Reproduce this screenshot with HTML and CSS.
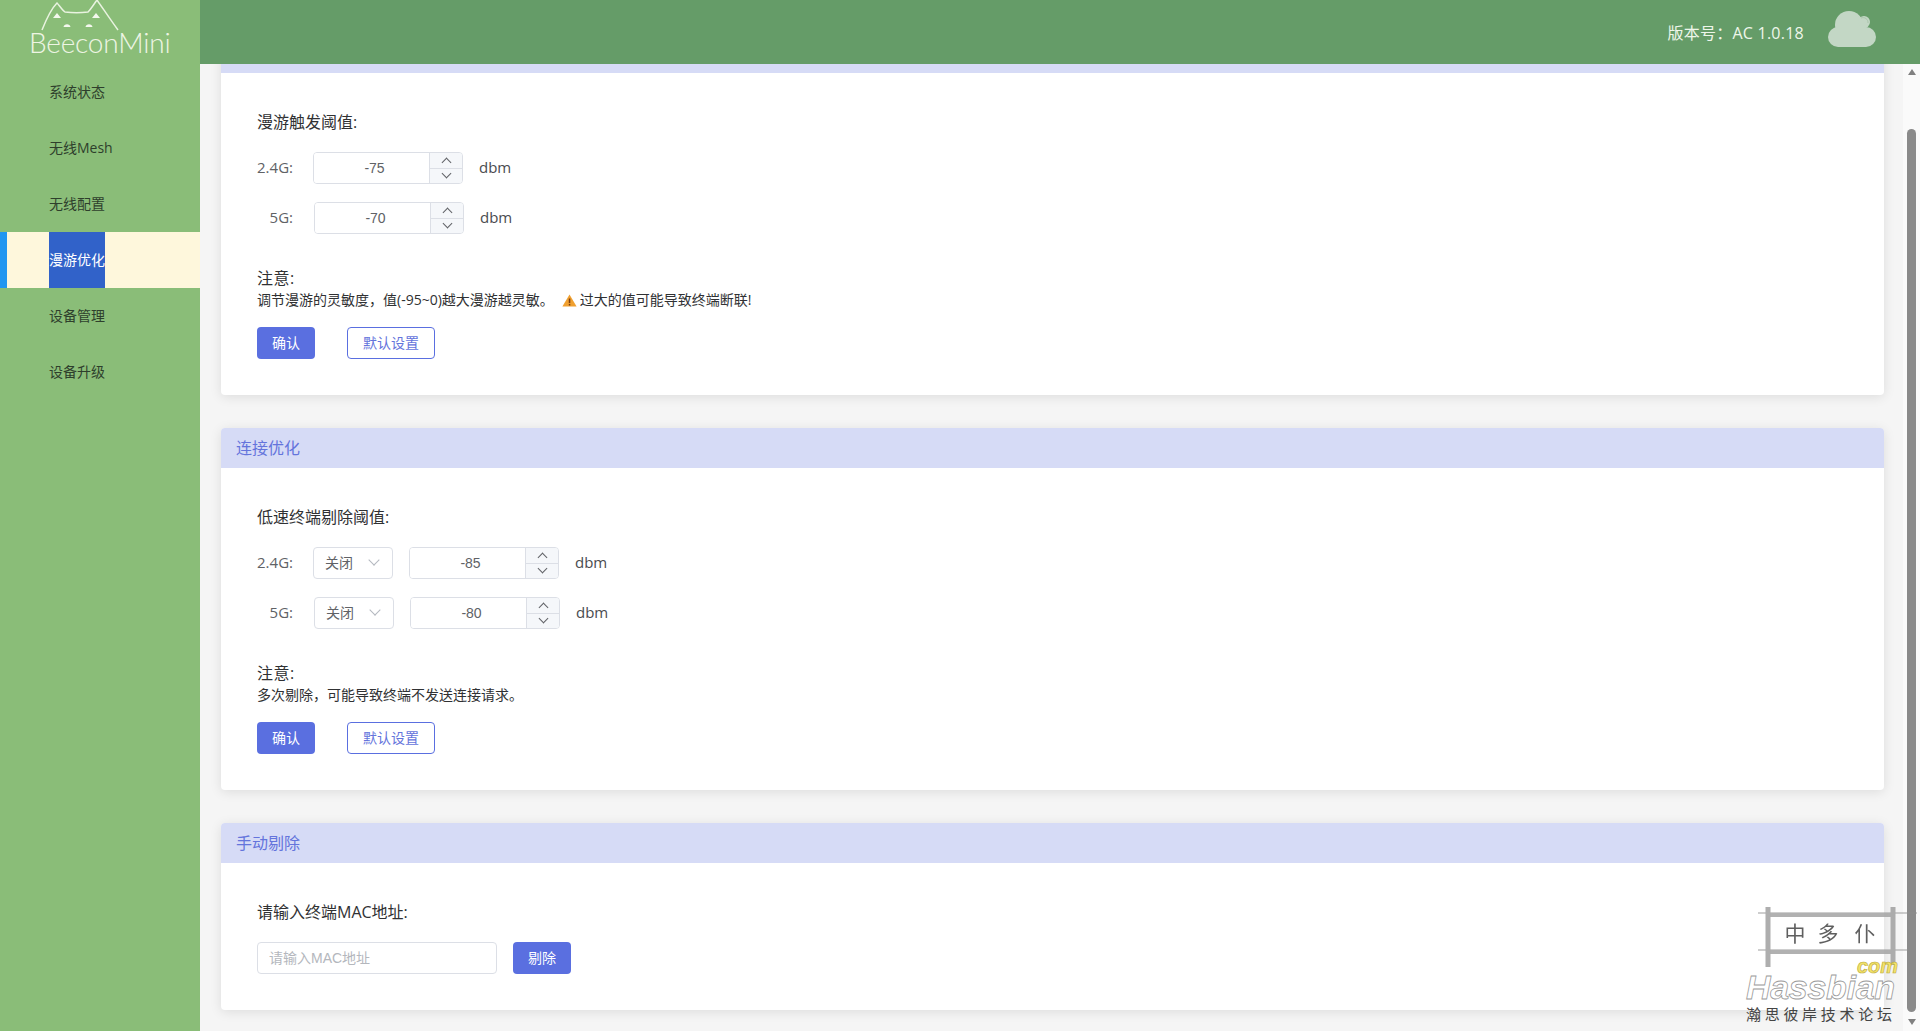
FILE: index.html
```html
<!DOCTYPE html>
<html lang="zh-CN">
<head>
  <meta charset="UTF-8" />
  <title>BeeconMini</title>
  <link rel="stylesheet" href="styles.css">
</head>
<body>

  <!-- Sidebar -->
  <aside class="sidebar">
    <div class="logo">
      <svg class="logo-cat" width="142" height="33" viewBox="0 0 142 33">
        <path d="M13 30 C17 20 22 9 28 3 C30 5 33 10 36 12 C44 13 51 13 59 12 C62 9 65 4 68 0 C75 10 83 22 89 30" fill="none" stroke="#e9f3e0" stroke-width="1.5"/>
        <path d="M24 18 L28 13 L32 18 Z M63 18 L67 13 L71 18 Z" fill="#f4f8ee"/>
        <path d="M34.5 27 A3.6 3.6 0 0 1 41.5 27 Z M56.5 27 A3.6 3.6 0 0 1 63.5 27 Z" fill="#f4f8ee"/>
      </svg>
      <span class="logo-text">BeeconMini</span>
    </div>
    <nav class="menu">
      <a class="menu-item"><span>系统状态</span></a>
      <a class="menu-item"><span>无线Mesh</span></a>
      <a class="menu-item"><span>无线配置</span></a>
      <a class="menu-item active"><span>漫游优化</span></a>
      <a class="menu-item"><span>设备管理</span></a>
      <a class="menu-item"><span>设备升级</span></a>
    </nav>
  </aside>

  <div class="main">
    <header class="topbar">
      <span class="version">版本号&#65306;AC 1.0.18</span>
      <svg class="cloud" width="48" height="36" viewBox="0 0 48 36">
        <g fill="#c3d7c5">
          <circle cx="21" cy="14" r="14"/>
          <circle cx="36" cy="11" r="6"/>
          <circle cx="10" cy="26" r="10"/>
          <circle cx="38" cy="26" r="10"/>
          <rect x="10" y="16" width="28" height="20"/>
        </g>
        <path d="M33 7 A5 5 0 0 1 40 12" fill="none" stroke="#a9c6ab" stroke-width="1"/>
      </svg>
    </header>

    <div class="page">
      <div class="content">

        <!-- Roaming, the head of this card is scrolled under the top bar -->
        <section class="card card-scrolled">
          <div class="card-head"></div>
          <div class="card-body">
            <div class="field-title">漫游触发阈值:</div>
            <div class="row">
              <label class="row-label">2.4G:</label>
              <div class="stepper">
                <input type="text" value="-75" />
                <div class="step"><span><i class="up"></i></span><span><i class="down"></i></span></div>
              </div>
              <span class="unit">dbm</span>
            </div>
            <div class="row row-5g">
              <label class="row-label">5G:</label>
              <div class="stepper">
                <input type="text" value="-70" />
                <div class="step"><span><i class="up"></i></span><span><i class="down"></i></span></div>
              </div>
              <span class="unit">dbm</span>
            </div>
            <div class="note-title">注意:</div>
            <div class="note">调节漫游的灵敏度&#65292;值(-95~0)越大漫游越灵敏。<svg class="warn" width="15" height="13" viewBox="0 0 15 13">
                <path d="M7.5 0.5 L14.6 12.6 L0.4 12.6 Z" fill="#f0a030"/>
                <rect x="6.8" y="4.5" width="1.5" height="4.6" fill="#7a3d10"/>
                <rect x="6.8" y="10" width="1.5" height="1.5" fill="#7a3d10"/>
              </svg>过大的值可能导致终端断联!</div>
            <div class="actions">
              <button class="btn btn-primary">确认</button>
              <button class="btn btn-plain">默认设置</button>
            </div>
          </div>
        </section>

        <!-- Connection -->
        <section class="card">
          <h3 class="card-head">连接优化</h3>
          <div class="card-body">
            <div class="field-title">低速终端剔除阈值:</div>
            <div class="row">
              <label class="row-label">2.4G:</label>
              <div class="select">关闭<i class="down"></i></div>
              <div class="stepper">
                <input type="text" value="-85" />
                <div class="step"><span><i class="up"></i></span><span><i class="down"></i></span></div>
              </div>
              <span class="unit">dbm</span>
            </div>
            <div class="row row-5g">
              <label class="row-label">5G:</label>
              <div class="select">关闭<i class="down"></i></div>
              <div class="stepper">
                <input type="text" value="-80" />
                <div class="step"><span><i class="up"></i></span><span><i class="down"></i></span></div>
              </div>
              <span class="unit">dbm</span>
            </div>
            <div class="note-title">注意:</div>
            <div class="note">多次剔除&#65292;可能导致终端不发送连接请求。</div>
            <div class="actions">
              <button class="btn btn-primary">确认</button>
              <button class="btn btn-plain">默认设置</button>
            </div>
          </div>
        </section>

        <!-- Manual kick -->
        <section class="card">
          <h3 class="card-head">手动剔除</h3>
          <div class="card-body">
            <div class="field-title">请输入终端MAC地址:</div>
            <div class="row">
              <input class="mac-input" type="text" placeholder="请输入MAC地址" />
              <button class="btn btn-primary">剔除</button>
            </div>
          </div>
        </section>
      </div>

      <div class="scrollbar">
        <span class="arrow-up"></span>
        <span class="thumb"></span>
        <span class="arrow-down"></span>
      </div>
    </div>
  </div>

  <!-- Forum watermark over the corner of the shot -->
  <div class="watermark">
    <svg class="stamp" width="166" height="62" viewBox="0 0 166 62">
      <rect x="30" y="12" width="100" height="30" fill="#fff"/>
      <g class="stamp-lines" fill="none">
        <path d="M6 6 H165 M6 43 H156" stroke-width="1.2" stroke="#8d8d8d"/>
        <path d="M16 8 H142 M16 45 H142" stroke-width="4" stroke="#a4a4a4"/>
        <path d="M16 0 V60 M141 0 V58" stroke-width="5" stroke="#a0a0a0"/>
      </g>
      <g class="stamp-text">
        <text x="43" y="34">中</text>
        <text x="76" y="34">多</text>
        <text x="113" y="34">仆</text>
      </g>
    </svg>
    <span class="wm-com">com</span>
    <span class="wm-name">Hassbian</span>
    <span class="wm-cn">瀚思彼岸技术论坛</span>
  </div>

</body>
</html>
```

FILE: styles.css
```css
* {
  box-sizing: border-box;
}
body {
  margin: 0;
  height: 100vh;
  display: flex;
  overflow: hidden;
  background: #f5f5f5;
  color: #303133;
  font-family: "Open Sans", "Noto Sans CJK SC", sans-serif;
  font-size: 14px;
}

/* sidebar */
.sidebar {
  width: 200px;
  flex-shrink: 0;
  background: #8abd78;
}
.logo {
  height: 64px;
  padding: 0 0 0 29px;
  overflow: hidden;
}
.logo-cat {
  display: block;
}
.logo-text {
  display: block;
  margin-top: -5px;
  font-family: Lato, sans-serif;
  font-weight: 300;
  font-size: 28px;
  line-height: 28px;
  letter-spacing: -0.2px;
  color: #eef5e4;
}
.menu-item {
  display: flex;
  height: 56px;
  padding-left: 49px;
  line-height: 55px;
  color: #2e3f2c;
}
.menu-item.active {
  background: #fef7dc;
  border-left: 7px solid #2196f0;
  padding-left: 42px;
}
.menu-item.active span {
  background: #3162c9;
  color: #fff;
}

/* top bar */
.main {
  flex: 1;
  min-width: 0;
  display: flex;
  flex-direction: column;
}
.topbar {
  height: 64px;
  flex-shrink: 0;
  display: flex;
  align-items: center;
  justify-content: flex-end;
  gap: 24px;
  padding-right: 44px;
  background: #659c68;
  position: relative;
  z-index: 1;
}
.version {
  font-size: 16px;
  letter-spacing: 0.25px;
  color: #eef6ea;
}
.cloud {
  margin-top: -6px;
}

/* page */
.page {
  flex: 1;
  min-height: 0;
  display: flex;
}
.content {
  flex: 1;
  min-width: 0;
  padding: 0 19px 0 21px;
  overflow: hidden;
}
.card {
  margin-bottom: 33px;
  background: #fff;
  border-radius: 4px;
  box-shadow: 0 2px 12px rgba(0,0,0,0.1);
}
.card-scrolled {
  margin-top: -31px;
}
.card-head {
  margin: 0;
  height: 40px;
  padding-left: 15px;
  line-height: 40px;
  font-size: 16px;
  font-weight: normal;
  color: #6474dc;
  background: #d6dbf6;
  border-radius: 4px 4px 0 0;
}
.card-body {
  padding: 36px;
}
.field-title {
  height: 28px;
  line-height: 26px;
  margin-bottom: 15px;
  font-size: 16px;
}
.row {
  display: flex;
  align-items: center;
  height: 32px;
}
.row + .row {
  margin-top: 18px;
}
.row-label {
  width: 36px;
  margin-right: 20px;
  padding-bottom: 2px;
  text-align: right;
  white-space: nowrap;
  color: #606266;
  font-size: 15px;
}
.row-5g .row-label {
  width: 36px;
  margin-right: 21px;
}
.unit {
  margin-left: 16px;
  padding-bottom: 2px;
  color: #4a4c50;
  font-size: 15px;
}

/* inputs */
.stepper {
  width: 150px;
  height: 32px;
  display: flex;
  border: 1px solid #dcdfe6;
  border-radius: 4px;
  overflow: hidden;
}
.stepper input {
  flex: 1;
  min-width: 0;
  border: none;
  outline: none;
  padding: 0 0 0 6px;
  text-align: center;
  color: #606266;
  font-family: "Liberation Sans", sans-serif;
  font-size: 14px;
}
.step {
  width: 33px;
  display: flex;
  flex-direction: column;
  background: #f5f7fa;
  border-left: 1px solid #dcdfe6;
}
.step span {
  flex: 1;
  display: flex;
  align-items: center;
  justify-content: center;
}
.step span + span {
  border-top: 1px solid #dcdfe6;
}
.up, .down {
  display: block;
  width: 7px;
  height: 7px;
  border-top: 1px solid #606266;
  border-left: 1px solid #606266;
}
.up {
  transform: translateY(2px) rotate(45deg);
}
.down {
  transform: translateY(-2px) rotate(225deg);
}
.select {
  width: 80px;
  height: 32px;
  margin-right: 16px;
  padding: 0 14px 2px 11px;
  display: flex;
  align-items: center;
  justify-content: space-between;
  border: 1px solid #dcdfe6;
  border-radius: 4px;
  color: #606266;
}
.select .down {
  width: 8px;
  height: 8px;
  border-color: #b4b8bf;
}
.mac-input {
  width: 240px;
  height: 32px;
  margin-right: 16px;
  padding: 0 11px;
  border: 1px solid #dcdfe6;
  border-radius: 4px;
  outline: none;
  font-family: "Liberation Sans", "Noto Sans CJK SC", sans-serif;
  font-size: 14px;
}
.mac-input::placeholder {
  color: #b4b7bd;
}

/* notes and buttons */
.note-title {
  height: 28px;
  line-height: 28px;
  margin-top: 30px;
  font-size: 16px;
  letter-spacing: 0.5px;
}
.note {
  height: 16px;
  line-height: 16px;
  font-size: 14px;
  white-space: nowrap;
}
.warn {
  vertical-align: -2px;
  margin: 0 3px 0 8px;
}
.actions {
  display: flex;
  gap: 32px;
  margin-top: 19px;
}
.btn {
  height: 32px;
  padding: 0 0 2px;
  border-radius: 4px;
  font-family: inherit;
  font-size: 14px;
  cursor: pointer;
}
.btn-primary {
  width: 58px;
  border: none;
  background: #5a6fe0;
  color: #fff;
}
.btn-plain {
  width: 88px;
  border: 1px solid #5a6fe0;
  background: #fff;
  color: #6474dc;
}

/* scrollbar */
.scrollbar {
  width: 17px;
  flex-shrink: 0;
  display: flex;
  flex-direction: column;
  align-items: center;
  background: #fafafa;
}
.arrow-up, .arrow-down {
  width: 0;
  height: 0;
  border-left: 4px solid transparent;
  border-right: 4px solid transparent;
}
.arrow-up {
  margin-top: 5px;
  border-bottom: 6px solid #808080;
}
.arrow-down {
  margin-top: 7px;
  border-top: 6px solid #808080;
}
.thumb {
  width: 9px;
  height: 883px;
  margin-top: 54px;
  border-radius: 5px;
  background: #8a8a8a;
}

/* watermark */
.watermark {
  position: absolute;
  right: 0;
  bottom: 0;
  width: 180px;
  height: 131px;
}
.stamp {
  position: absolute;
  left: 12px;
  top: 7px;
}
.stamp-lines {
  filter: blur(0.6px);
  opacity: 0.85;
}
.stamp-text {
  font-family: "Noto Sans CJK SC", sans-serif;
  font-size: 21px;
  fill: #5f5f5f;
  text-anchor: middle;
  filter: blur(0.3px);
}
.wm-com {
  position: absolute;
  left: 117px;
  top: 58px;
  font: italic bold 20px "Liberation Sans", sans-serif;
  line-height: 16px;
  color: #f4e36a;
  -webkit-text-stroke: 0.6px #b9a93a;
}
.wm-name {
  position: absolute;
  left: 6px;
  top: 76px;
  font: italic bold 34px "Liberation Sans", sans-serif;
  line-height: 22px;
  letter-spacing: -0.3px;
  color: #fff;
  -webkit-text-stroke: 0.8px #999;
}
.wm-cn {
  position: absolute;
  left: 6px;
  top: 103px;
  font-family: "Noto Sans CJK SC", sans-serif;
  font-size: 15px;
  line-height: 22px;
  letter-spacing: 3.7px;
  color: #444;
  white-space: nowrap;
}
```
